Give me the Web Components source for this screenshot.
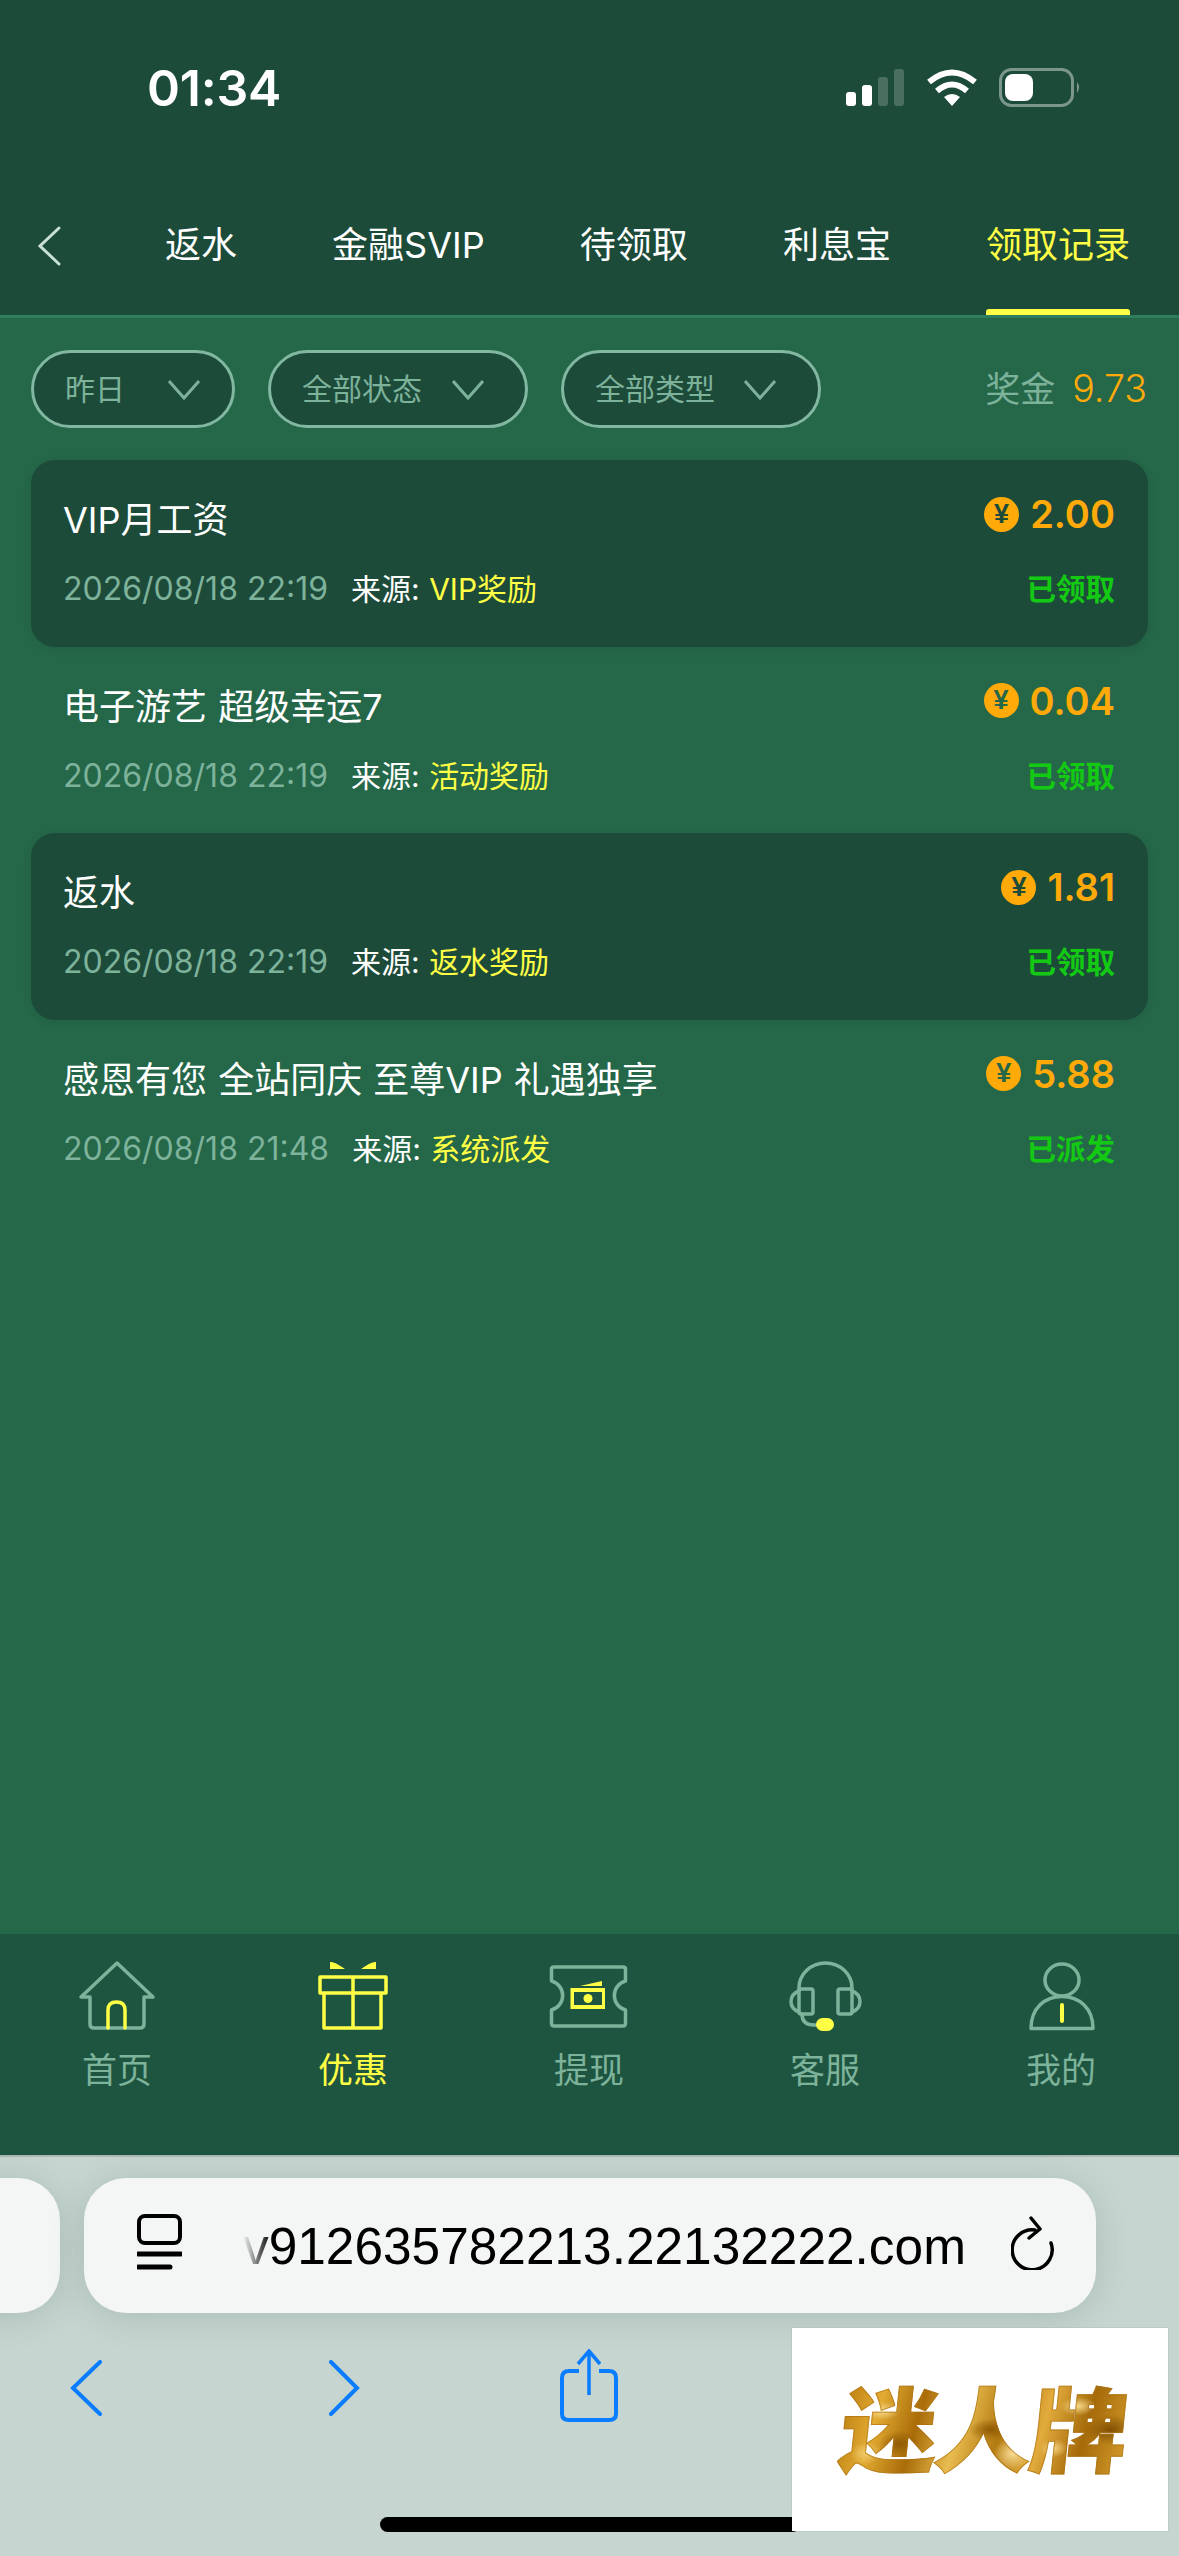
<!DOCTYPE html>
<html lang="zh"><head><meta charset="utf-8">
<style>
html,body{margin:0;padding:0;width:1179px;height:2556px;overflow:hidden;background:#256749}
body{font-family:"Noto Sans CJK SC","Noto Sans",sans-serif;}
app-screen{height:2556px}
</style></head><body>
<app-screen></app-screen>
<script>
const CJK='Inter,"Noto Sans CJK SC",sans-serif';
function def(name,css,html){
  customElements.define(name,class extends HTMLElement{
    connectedCallback(){
      if(this.shadowRoot)return;
      const r=this.attachShadow({mode:'open'});
      r.innerHTML='<style>'+css+'</style>'+(typeof html==='function'?html(this):html);
    }
  });
}
def('status-bar',`
:host{display:flex;justify-content:space-between;align-items:flex-start;height:190px;box-sizing:border-box;padding:60px 94px 0 147px}
.t{font:600 50px/56px Inter,sans-serif;color:#fff;letter-spacing:-.2px}
svg{display:block;margin-top:7px}
`,`<div class="t">01:34</div>
<svg width="245" height="46" viewBox="0 0 245 46">
<rect x="6" y="25" width="10" height="14" rx="3" fill="#fff"/>
<rect x="22" y="18" width="10" height="21" rx="3" fill="#fff"/>
<rect x="38" y="10" width="10" height="29" rx="3" fill="#fff" opacity=".2"/>
<rect x="54" y="2" width="10" height="37" rx="3" fill="#fff" opacity=".2"/>
<path d="M89 15 Q112 -4 135 15" fill="none" stroke="#fff" stroke-width="6"/>
<path d="M97 24 Q112 11 127 24" fill="none" stroke="#fff" stroke-width="6"/>
<path d="M104 30 Q112 24 120 30 L112 39Z" fill="#fff"/>
<rect x="160.500" y="2.500" width="72" height="36" rx="11" fill="none" stroke="#fff" stroke-opacity=".42" stroke-width="3"/>
<rect x="165" y="7" width="28" height="27" rx="8" fill="#fff"/>
<path d="M237 15 Q241 20 237 26Z" fill="#fff" fill-opacity=".45"/>
</svg>`);
def('tab-bar',`
:host{display:flex;align-items:stretch;height:125px;border-bottom:3px solid #2d7d5e;background:#1d4b3a;box-sizing:content-box;position:relative}
.b{width:165px;flex:none;display:flex;align-items:center;padding-left:37px;box-sizing:border-box;padding-bottom:14px}
.l{flex:1;display:flex;justify-content:space-between;padding-right:49px}
`,`<div class="b"><svg width="24" height="40" viewBox="0 0 24 40"><path d="M22 2 L3 20 L22 38" fill="none" stroke="#c9e0d5" stroke-width="3" stroke-linecap="round"/></svg></div><div class="l"><slot></slot></div>`);
def('tab-item',`
:host{display:flex;flex-direction:column;align-items:center;height:125px;box-sizing:border-box;padding-top:30px;font:400 36px/50px ${CJK};color:#fff;position:relative;white-space:nowrap}
:host([active]){color:#ffff45}
:host([active])::after{content:"";position:absolute;left:0;right:0;bottom:0;height:6px;background:#ffff45;border-radius:3px 3px 0 0}
`,`<slot></slot>`);
def('filter-pill',`
:host{display:flex;align-items:center;height:78px;box-sizing:border-box;border:3px solid #82b8a1;border-radius:39px;background:#1d4b3a;color:#7db29b;font:400 30px/40px ${CJK};padding:0 0 0 31px;white-space:nowrap}
svg{display:block;flex:none;margin-right:var(--cr,40px);margin-top:2px}
.g{flex:1;min-width:0}
`,`<span class="g"><slot></slot></span><svg width="32" height="20" viewBox="0 0 32 20"><path d="M1 1 L16 18 L31 1" fill="none" stroke="#7db29b" stroke-width="3"/></svg>`);
def('filter-row',`
:host{display:flex;align-items:center;height:78px;margin:32px 32px 32px 31px;gap:33px}
.s{margin-left:auto;display:flex;align-items:center;gap:17px;font:400 35px/50px ${CJK};color:#7db29b;white-space:nowrap}
.v{color:#ffaa09;font-size:37.500px;font-weight:300}
`,`<slot></slot><div class="s"><span>奖金</span><span class="v">9.73</span></div>`);
def('record-row',`
:host{display:grid;grid-template-columns:1fr auto;grid-template-rows:auto auto;align-content:start;height:186.500px;box-sizing:border-box;margin:0 31px;padding:35px 33px 0 32px;color:#fff;border-radius:24px;--cut:#256749}
:host([dark]){background:#1d4b3a;box-shadow:0 2px 10px rgba(0,0,0,.08);--cut:#1d4b3a}
.ti{font:400 36px/54px ${CJK};white-space:nowrap;word-spacing:1px;margin-top:-2px}
.am{display:flex;align-items:center;gap:11px;font:600 38px/44px Inter,sans-serif;color:#ffaa09;justify-self:end;height:44px;margin-top:-3px}
.coin{width:35px;height:35px;border-radius:50%;background:#ffaa09;color:var(--cut);font:700 27px/35px "Liberation Sans",sans-serif;text-align:center;flex:none}
.m{display:flex;align-items:center;margin-top:20px;font:400 30px/44px ${CJK};white-space:nowrap}
.d{color:#7db29b;margin-right:23px;font-size:32px}
.src{color:#ffff45;margin-left:1px}
.st{justify-self:end;margin-top:20px;font:700 29.500px/44px ${CJK};color:#14c914;white-space:nowrap}
`,el=>`<div class="ti">${el.getAttribute('title-text')}</div><div class="am"><span class="coin">¥</span><span>${el.getAttribute('amount')}</span></div>
<div class="m"><span class="d">${el.getAttribute('date')}</span><span>来源:&nbsp;</span><span class="src">${el.getAttribute('src')}</span></div><div class="st">${el.getAttribute('state')}</div>`);
def('record-list',`:host{display:block;flex:1;min-height:0}`,`<slot></slot>`);
def('nav-item',`
:host{display:flex;flex-direction:column;align-items:center;width:236px;font:400 35px/50px ${CJK};color:#7db29b;padding-top:24px;box-sizing:border-box}
:host([active]){color:#ffff45}
::slotted(svg){display:block;width:90px;height:80px;margin-bottom:7px;overflow:visible}
`,`<slot name="i"></slot><slot></slot>`);
def('bottom-nav',`
:host{display:flex;height:221px;background:#1d5540;box-sizing:border-box;margin-left:-1px}
`,`<slot></slot>`);
def('browser-bar',`
:host{display:block;height:401px;background:#c6d5d0;border-top:2px solid #aab8b3;box-sizing:border-box;position:relative}
.top{display:flex;gap:24px;margin:21px 0 0 -60px;width:1154px}
.prev{width:120px;height:135px;flex:none;background:#f4f6f5;border-radius:42px;box-shadow:0 4px 34px rgba(50,80,70,.18)}
.url{flex:1;height:135px;background:#f4f6f5;border-radius:42px;box-shadow:0 4px 34px rgba(50,80,70,.18);display:flex;align-items:center;box-sizing:border-box;padding:0 39px 0 53px}
.clip{flex:1;overflow:hidden;margin:0 45px 0 61px;height:70px;position:relative;direction:rtl;text-align:right;
 -webkit-mask-image:linear-gradient(90deg,transparent 0,#000 28px);mask-image:linear-gradient(90deg,transparent 0,#000 28px)}
.clip span{font:400 51.400px/70px "Liberation Sans",sans-serif;color:#000;white-space:nowrap;direction:ltr;unicode-bidi:embed;display:inline-block}
.tools{display:flex;align-items:flex-start;margin-top:33px;padding-left:70px}
svg{display:block;flex:none}
.reload{margin-top:-5px}
.home{position:absolute;left:380px;top:360px;width:420px;height:15px;background:#000;border-radius:8px}
`,`<div class="top"><div class="prev"></div><div class="url">
<svg width="45" height="64" viewBox="0 0 45 64"><rect x="2" y="2" width="41" height="27" rx="6" fill="none" stroke="#000" stroke-width="4"/><path d="M1 40H44M1 53H33" stroke="#000" stroke-width="5" stroke-linecap="round"/></svg>
<div class="clip"><span>v912635782213.22132222.com</span></div>
<svg class="reload" width="46" height="54" viewBox="0 0 46 54"><path d="M25 11 A20 20 0 1 0 41 24" fill="none" stroke="#000" stroke-width="3.500" stroke-linecap="round" transform="translate(-1,3)"/><path d="M20 2 L29 13 L18 22" fill="none" stroke="#000" stroke-width="3.500" stroke-linecap="round" stroke-linejoin="round"/></svg>
</div></div>
<div class="tools">
<svg style="margin-top:14px" width="32" height="56" viewBox="0 0 32 56"><path d="M30 2 L3 28 L30 54" fill="none" stroke="#0a7cff" stroke-width="4" stroke-linecap="round"/></svg>
<svg style="margin:14px 0 0 226px" width="32" height="56" viewBox="0 0 32 56"><path d="M3 2 L29 28 L3 54" fill="none" stroke="#0a7cff" stroke-width="4" stroke-linecap="round"/></svg>
<svg style="margin:3px 0 0 199px" width="60" height="76" viewBox="0 0 60 76"><path d="M20 22 H10 Q3 22 3 29 V65 Q3 71 10 71 H50 Q57 71 57 65 V29 Q57 22 50 22 H40" fill="none" stroke="#0a7cff" stroke-width="4"/><path d="M30 46 V3 M19 15 L30 2 L41 15" fill="none" stroke="#0a7cff" stroke-width="3.500"/></svg>
</div>
<div class="home"></div>`);
def('brand-stamp',`
:host{position:absolute;left:792px;top:2328px;width:376px;height:203px;background:#fff;box-shadow:0 0 1px rgba(0,0,0,.25);display:flex;align-items:center;justify-content:center;overflow:hidden}
.w{font:900 98px/110px "Noto Sans CJK SC",sans-serif;white-space:nowrap;transform:skewX(-6deg) scaleY(.94);
background:
 radial-gradient(18px 10px at 40px 40px,#f5d98a,transparent),
 radial-gradient(20px 14px at 60px 75px,#8f5a05,transparent),
 radial-gradient(16px 12px at 28px 85px,#f0cc70,transparent),
 radial-gradient(22px 12px at 150px 60px,#8f5a05,transparent),
 radial-gradient(20px 18px at 175px 85px,#f7dd98,transparent),
 radial-gradient(18px 10px at 235px 35px,#f5d98a,transparent),
 radial-gradient(24px 16px at 270px 60px,#7f4f04,transparent),
 radial-gradient(14px 10px at 215px 80px,#f3d27f,transparent),
 linear-gradient(100deg,#b8790d 0%,#e2ab32 14%,#a96c08 28%,#e8bc50 42%,#b37a10 56%,#e2ab3c 70%,#a56a0a 84%,#d29a2a 100%);
-webkit-background-clip:text;background-clip:text;color:transparent;letter-spacing:-3px;margin:-10px 0 0 8px;-webkit-text-stroke:1px rgba(170,110,15,.6)}
`,`<div class="w">迷人牌</div>`);
def('app-screen',`
:host{display:flex;flex-direction:column;width:1179px;height:2556px;position:relative;background:#256749;overflow:hidden}
.head{background:#1d4b3a;flex:none}
.mid{flex:1;min-height:0}
`,`<div class="head"><status-bar></status-bar>
<tab-bar><tab-item>返水</tab-item><tab-item>金融SVIP</tab-item><tab-item>待领取</tab-item><tab-item>利息宝</tab-item><tab-item active>领取记录</tab-item></tab-bar></div>
<div class="mid"><filter-row><filter-pill style="width:204px;--cr:32px">昨日</filter-pill><filter-pill style="width:260px;--cr:41px">全部状态</filter-pill><filter-pill style="width:260px;--cr:42px">全部类型</filter-pill></filter-row>
<record-list>
<record-row dark title-text="VIP月工资" amount="2.00" date="2026/08/18 22:19" src="VIP奖励" state="已领取"></record-row>
<record-row title-text="电子游艺 超级幸运7" amount="0.04" date="2026/08/18 22:19" src="活动奖励" state="已领取"></record-row>
<record-row dark title-text="返水" amount="1.81" date="2026/08/18 22:19" src="返水奖励" state="已领取"></record-row>
<record-row title-text="感恩有您 全站同庆 至尊VIP 礼遇独享" amount="5.88" date="2026/08/18 21:48" src="系统派发" state="已派发"></record-row>
</record-list></div>
<bottom-nav>
<nav-item><svg slot="i" viewBox="0 0 90 80" fill="none" stroke-width="3.500" stroke-linejoin="round" stroke-linecap="round"><path d="M18 39 H9 L45 5 L81 39 H72 V66 Q72 70 68 70 H22 Q18 70 18 66Z" stroke="#7db29b"/><path d="M36 70 V52 Q36 44 44.500 44 Q53 44 53 52 V70" stroke="#ffff45"/></svg>首页</nav-item>
<nav-item active><svg slot="i" viewBox="0 0 90 80" fill="none" stroke="#ffff45" stroke-width="3.500" stroke-linejoin="round"><path d="M12 19 H78 V35 H12Z M16 35 V70 H73 V35 M45 19 V70"/><path d="M22 4 Q26 3 37 11 H22Z M68 4 Q64 3 53 11 H68Z" fill="#ffff45" stroke="none"/></svg>优惠</nav-item>
<nav-item><svg slot="i" viewBox="0 0 90 80" fill="none" stroke-width="3.500" stroke-linejoin="round"><path d="M10 9 H79 Q81.500 9 81.500 11 V23 A15 15 0 0 0 81.500 52 V65 Q81.500 68 79 68 H10 Q7.500 68 7.500 65 V52 A15 15 0 0 0 7.500 23 V11 Q7.500 9 10 9Z" stroke="#7db29b"/><path d="M26.500 30 H61 V51 H26.500Z" fill="#ffff45" stroke="none"/><path d="M30 34 H58 V47 H30Z" fill="#1d5540" stroke="none"/><circle cx="44" cy="40.500" r="4.500" fill="#ffff45"/><path d="M36 28 L58 23 V28Z" fill="#ffff45"/></svg>提现</nav-item>
<nav-item><svg slot="i" viewBox="0 0 90 80" fill="none" stroke="#7db29b" stroke-width="3.500" stroke-linecap="round" stroke-linejoin="round"><path d="M19 32 V30 A26.500 25 0 0 1 72 30 V32"/><rect x="19" y="31" width="14" height="25" rx="2"/><rect x="58" y="31" width="14" height="25" rx="2"/><path d="M19 33 Q11 36 11 43.500 Q11 51 19 54 M72 33 Q80 36 80 43.500 Q80 51 72 54"/><path d="M22 56 Q22 67 34 67 H38"/><rect x="36" y="60" width="18" height="13" rx="6.500" fill="#ffff45" stroke="none"/></svg>客服</nav-item>
<nav-item><svg slot="i" viewBox="0 0 90 80" fill="none" stroke="#7db29b" stroke-width="3.500" stroke-linejoin="round"><ellipse cx="46" cy="22" rx="17" ry="16"/><path d="M15 70.500 C15 50 29 38.500 46 38.500 C63 38.500 77 50 77 70.500Z"/><path d="M46 47 V63" stroke="#ffff45" stroke-width="4" stroke-linecap="round"/></svg>我的</nav-item>
</bottom-nav>
<browser-bar></browser-bar>
<brand-stamp></brand-stamp>`);
</script>
</body></html>
